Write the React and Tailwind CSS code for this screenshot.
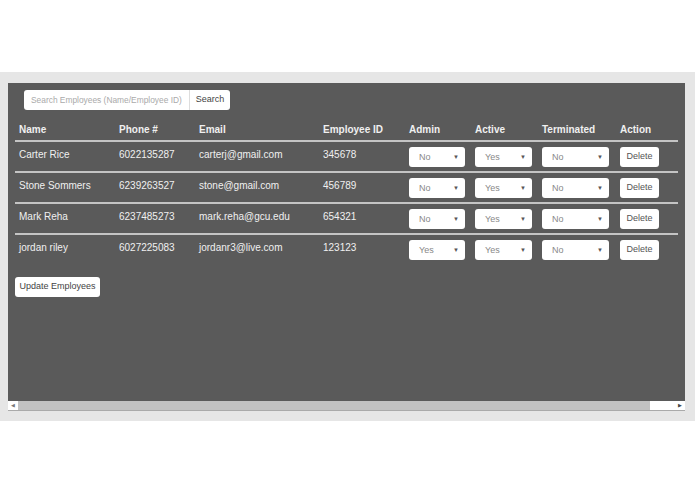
import React from "react";

const rows = [
  { name: "Carter Rice", phone: "6022135287", email: "carterj@gmail.com", id: "345678", admin: "No", active: "Yes", term: "No" },
  { name: "Stone Sommers", phone: "6239263527", email: "stone@gmail.com", id: "456789", admin: "No", active: "Yes", term: "No" },
  { name: "Mark Reha", phone: "6237485273", email: "mark.reha@gcu.edu", id: "654321", admin: "No", active: "Yes", term: "No" },
  { name: "jordan riley", phone: "6027225083", email: "jordanr3@live.com", id: "123123", admin: "Yes", active: "Yes", term: "No" },
];

function Sel({ value, w }) {
  return (
    <div className={`${w} h-[20px] bg-white rounded-[3px] flex items-center justify-between pl-[10px] pr-[6px] text-[9px] text-[#888]`}>
      <span className="pt-[1px]">{value}</span>
      <span className="text-[6px] text-[#555]">▼</span>
    </div>
  );
}

export default function App() {
  return (
    <div className="w-[695px] h-[494px] bg-white relative" style={{ fontFamily: '"Liberation Sans", Arial, sans-serif' }}>
      <div className="h-[72px]" />
      <div className="h-[349px] bg-[#e6e6e6] pt-[11px] px-[8px]">
        <div className="w-[677px] h-[318px] bg-[#5a5a5a] flex flex-col">
          <div className="pt-[7px] pl-[16px] flex">
            <div className="w-[165px] h-[20px] bg-white rounded-l-[3px] flex items-center pl-[7px] text-[8.4px] text-[#aaa] whitespace-nowrap overflow-hidden">Search Employees (Name/Employee ID)</div>
            <div className="w-[41px] h-[20px] bg-white rounded-r-[3px] border-l border-[#ddd] flex items-center justify-center text-[9px] text-[#444]">Search</div>
          </div>
          <div className="mx-[7px] mt-[12px] text-[#f0f0f0]">
            <div className="flex h-[20px] items-center pb-[4px] pl-[4px] text-[10px] font-bold border-b-2 border-[#c4c4c4]">
              <div className="w-[100px]">Name</div>
              <div className="w-[80px]">Phone #</div>
              <div className="w-[124px]">Email</div>
              <div className="w-[86px]">Employee ID</div>
              <div className="w-[66px]">Admin</div>
              <div className="w-[67px]">Active</div>
              <div className="w-[78px]">Terminated</div>
              <div>Action</div>
            </div>
            {rows.map((r, i) => (
              <div key={i} className={`flex h-[31px] pl-[4px] text-[10px] ${i < rows.length - 1 ? "border-b-2 border-[#c4c4c4]" : ""}`}>
                <div className="w-[100px] pt-[5px]">{r.name}</div>
                <div className="w-[80px] pt-[5px]">{r.phone}</div>
                <div className="w-[124px] pt-[5px]">{r.email}</div>
                <div className="w-[86px] pt-[5px]">{r.id}</div>
                <div className="w-[66px] pt-[5px]"><Sel value={r.admin} w="w-[56px]" /></div>
                <div className="w-[67px] pt-[5px]"><Sel value={r.active} w="w-[57px]" /></div>
                <div className="w-[78px] pt-[5px]"><Sel value={r.term} w="w-[67px]" /></div>
                <div className="pt-[5px]">
                  <div className="w-[39px] h-[20px] bg-white rounded-[3px] flex items-center justify-center text-[9px] text-[#555]">Delete</div>
                </div>
              </div>
            ))}
            <div className="mt-[11px] w-[85px] h-[20px] bg-white rounded-[3px] flex items-center justify-center text-[9px] text-[#444]">Update Employees</div>
          </div>
        </div>
        <div className="w-[677px] h-[10px] bg-[#c2c2c2] flex items-stretch border-b border-[#aaa]">
          <div className="w-[10px] bg-white flex items-center justify-center text-[5px] text-[#777]">◀</div>
          <div className="flex-1" />
          <div className="w-[35px] bg-white flex items-center justify-end pr-[3px] text-[5px] text-[#444]">▶</div>
        </div>
      </div>
    </div>
  );
}
